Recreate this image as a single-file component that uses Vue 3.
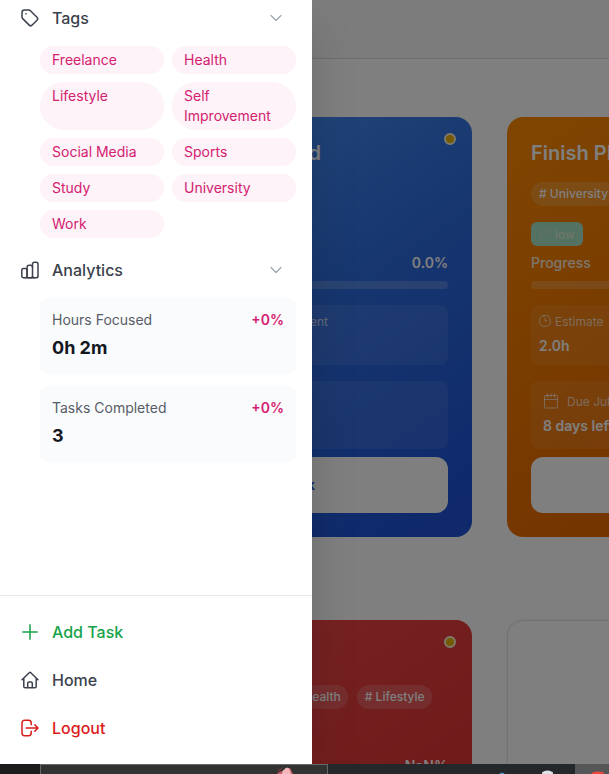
<script setup>
const tags = ['Freelance', 'Health', 'Lifestyle', 'Self Improvement', 'Social Media', 'Sports', 'Study', 'University', 'Work']
const stats = [
  { label: 'Hours Focused', value: '0h 2m', change: '+0%' },
  { label: 'Tasks Completed', value: '3', change: '+0%' },
]
</script>

<template>
  <div class="screen">
    <main class="page">
      <header class="topbar"></header>
      <section class="board">
        <article class="card blue">
          <i class="dot"></i>
          <h2 class="title tail">d</h2>
          <div class="chips"></div>
          <div class="badge-row"></div>
          <div class="progress"><span></span><b>0.0%</b></div>
          <div class="track"></div>
          <div class="metrics">
            <div class="metric"></div>
            <div class="metric spent"><div class="label">ent</div></div>
          </div>
          <div class="due"></div>
          <div class="button"><span>k</span></div>
        </article>

        <article class="card orange">
          <h2 class="title">Finish Pl</h2>
          <div class="chips"><span class="chip"># University</span></div>
          <div class="badge-row">
            <span class="badge">
              <svg width="12" height="12" viewBox="0 0 12 12"><path d="M1.500 11V2.200C4 .8 6.500 3.400 10.500 2v5.200C7 8.500 4.500 6.200 1.500 7.500" /></svg>
              low
            </span>
          </div>
          <div class="progress"><span>Progress</span></div>
          <div class="track"></div>
          <div class="metrics">
            <div class="metric">
              <div class="label">
                <svg width="12" height="12" viewBox="0 0 12 12"><rect x=".7" y=".7" width="10.600" height="10.600" rx="4.300" /><path d="M6 3.500V6h2" /></svg>
                Estimate
              </div>
              <div class="value">2.0h</div>
            </div>
            <div class="metric"></div>
          </div>
          <div class="due">
            <div class="label">
              <svg width="16" height="16" viewBox="0 0 16 16"><rect x="1.500" y="2.500" width="13" height="12.500" rx="1" /><path d="M1.500 6.500h13M4.500 1v3.500M8 1v3M11.500 1v3.500" /></svg>
              Due Jul
            </div>
            <div class="value">8 days left</div>
          </div>
          <div class="button"></div>
        </article>

        <article class="card red">
          <i class="dot"></i>
          <h2 class="title"></h2>
          <div class="chips end"><span class="chip">ealth</span><span class="chip"># Lifestyle</span></div>
          <div class="badge-row"></div>
          <div class="progress"><span></span><b>NaN%</b></div>
        </article>
        <article class="card plain"></article>
      </section>
    </main>

    <div class="overlay"></div>

    <aside class="drawer">
      <nav class="nav">
        <div class="row first">
          <svg class="icon" viewBox="0 0 20 20"><path d="M2 4.400A2.400 2.400 0 0 1 4.400 2h4.400c.6 0 1.200.2 1.600.7l6.600 6.500c.9.9.9 2.100 0 3l-4.800 4.900c-.9.9-2.100.9-3 0L2.700 10.600A2.300 2.300 0 0 1 2 9z" /><circle cx="5.900" cy="5.900" r=".3" stroke-width=".8" /></svg>
          <span>Tags</span>
          <svg class="chevron" viewBox="0 0 16 16"><path d="M3 5.500l5 5 5-5" /></svg>
        </div>
        <div class="tags"><span v-for="tag in tags" :key="tag" class="tag">{{ tag }}</span></div>
        <div class="row analytics">
          <svg class="icon" viewBox="0 0 20 20"><rect x="1.800" y="8.500" width="5.300" height="9.300" rx="1.700" /><path d="M7.100 10V7.200a2 2 0 0 1 2-2h1.400a2 2 0 0 1 2 2M5.500 17.800h9" /><path d="M7.100 9.500v6.800a1.500 1.500 0 0 0 1.500 1.500h2.400a1.500 1.500 0 0 0 1.500-1.500" /><rect x="12.500" y="2.200" width="5.500" height="15.600" rx="1.900" /></svg>
          <span>Analytics</span>
          <svg class="chevron" viewBox="0 0 16 16"><path d="M3 5.500l5 5 5-5" /></svg>
        </div>
        <div class="stats">
          <div v-for="stat in stats" :key="stat.label" class="stat">
            <div class="stat-head"><span>{{ stat.label }}</span><b>{{ stat.change }}</b></div>
            <div class="stat-value">{{ stat.value }}</div>
          </div>
        </div>
      </nav>
      <div class="footer">
        <div class="row add">
          <svg class="icon" viewBox="0 0 20 20"><path d="M10 2.800v14.400M2.800 10h14.400" /></svg>
          <span>Add Task</span>
        </div>
        <div class="row">
          <svg class="icon" viewBox="0 0 20 20"><path d="M2 9.800L9.200 2.800a1.150 1.150 0 0 1 1.600 0L18 9.800M3.800 8.200v8.300c0 .8.500 1.300 1.300 1.300h9.800c.8 0 1.300-.5 1.300-1.300V8.200M7.700 17.600v-4.300c0-.8.400-1.200 1.200-1.200h2.200c.8 0 1.200.4 1.200 1.200v4.300" /></svg>
          <span>Home</span>
        </div>
        <div class="row logout">
          <svg class="icon" viewBox="0 0 20 20"><path d="M11.200 6.800V4.900A2.600 2.600 0 0 0 8.600 2.300H4.600A2.600 2.600 0 0 0 2 4.900v10.200a2.600 2.600 0 0 0 2.600 2.600h4a2.600 2.600 0 0 0 2.600-2.600v-1.900M6.300 10h11.400M14.800 6.800L18 10l-3.200 3.200" /></svg>
          <span>Logout</span>
        </div>
      </div>
    </aside>

    <div class="taskbar">
      <div class="start"></div>
      <div class="search">
        <svg width="20" height="9" viewBox="0 0 20 9"><path d="M2 9l4-3 3 2 2-4 4-1 3 6z" fill="#c9606c" /><path d="M7 9c0-3 1-4 2.500-4.500C10 2 14 2 14.500 4.500L16 9z" fill="#f2b6bb" /><path d="M3 4l3 3M3 7l4-4" stroke="#8e3742" /></svg>
      </div>
      <div class="apps">
        <svg width="247" height="10" viewBox="0 0 247 10"><ellipse cx="174" cy="10" rx="2.500" ry="1.200" fill="#499ac7" /><path d="M214 10a5.500 3.500 0 0 1 11 0z" fill="#dce2e8" /><path d="M215 8.500v1M219.500 7.800v1M224 8.500v1" stroke="#dce2e8" stroke-width="1.500" /></svg>
      </div>
      <div class="active">
        <svg width="34" height="10" viewBox="0 0 34 10"><path d="M16 10c2-3 5-3 13-2l-1 2z" fill="#e9483e" /></svg>
      </div>
    </div>
  </div>
</template>

<style>
body { margin: 0; overflow: hidden; }
</style>

<style scoped>
* { box-sizing: border-box; }
.screen { position: relative; width: 609px; height: 774px; overflow: hidden; font-family: Inter, "Liberation Sans", sans-serif; background: #fff; }
svg { display: block; flex: none; fill: none; stroke-linecap: round; stroke-linejoin: round; }

.page { width: 100%; height: 764px; overflow: hidden; background: #fff; }
.topbar { height: 59px; background: #f9f9fa; border-bottom: 1px solid #dadce0; }
.board { display: grid; grid-template-columns: 440px 440px; grid-auto-rows: 420px; gap: 83px 35px; padding: 58px 0 0 32px; }
.card { position: relative; padding: 24px; border-radius: 16px; color: #fff; }
.blue { background: linear-gradient(145deg, #4a93f8 15%, #2f6fe0 50%, #1e52d6 95%); }
.orange { background: linear-gradient(145deg, #ff8c00, #e05800); }
.red { background: linear-gradient(145deg, #f65050, #e03434 65%, #d42222); }
.plain { background: #fff; border: 1px solid #e7e7e9; box-shadow: 0 0 2px rgba(0, 0, 0, .12); }
.dot { position: absolute; top: 16px; right: 16px; width: 12px; height: 12px; border-radius: 50%; border: 2px solid #fbf3d8; background: #eab308; }
.title { height: 24px; margin: 0 0 17px; font-size: 20px; line-height: 24px; font-weight: 600; white-space: nowrap; }
.tail { width: 265px; text-align: right; }
.chips { display: flex; gap: 9px; height: 24px; margin-bottom: 16px; }
.chips.end { justify-content: flex-end; padding-right: 16px; }
.chips.end .chip { padding: 0 7.5px; }
.chip { padding: 0 8px; border-radius: 12px; background: rgba(255, 255, 255, .16); font-size: 12px; line-height: 24px; font-weight: 550; white-space: nowrap; }
.badge-row { display: flex; height: 24px; margin-bottom: 7px; }
.badge { display: flex; align-items: center; gap: 4px; width: 52px; padding-left: 8px; border-radius: 6px; background: #a9e5c2; color: #dcebdc; font-size: 12px; font-weight: 500; }
.badge svg { stroke: #c6e3cd; }
.progress { display: flex; justify-content: space-between; height: 20px; margin-bottom: 8px; font-size: 14px; line-height: 20px; font-weight: 500; }
.progress span { opacity: .85; }
.progress b { font-weight: 600; }
.track { height: 8px; margin-bottom: 16px; border-radius: 4px; background: rgba(255, 255, 255, .18); }
.metrics { display: grid; grid-template-columns: 1fr 1fr; gap: 12px; height: 60px; margin-bottom: 16px; }
.metric { padding: 8px; border-radius: 8px; background: rgba(255, 255, 255, .08); }
.label { display: flex; align-items: center; gap: 4px; height: 16px; font-size: 12px; color: rgba(255, 255, 255, .7); white-space: nowrap; }
.label svg { stroke: rgba(255, 255, 255, .65); stroke-width: 1; }
.spent .label { width: 62px; justify-content: flex-end; }
.value { margin-top: 7px; font-size: 14px; line-height: 20px; font-weight: 600; white-space: nowrap; }
.due { height: 68px; padding: 12px; margin-bottom: 8px; border-radius: 8px; background: rgba(255, 255, 255, .08); }
.due .label { gap: 8px; }
.due .value { margin-top: 7px; }
.button { height: 56px; border-radius: 12px; background: #fff; color: #1d4ed8; font-size: 14px; font-weight: 600; line-height: 56px; }
.button span { display: block; width: 259px; text-align: right; }

.overlay { position: absolute; inset: 0 0 10px; background: rgba(0, 0, 0, .5); }
.drawer { position: absolute; left: 0; top: 0; width: 312px; height: 764px; display: flex; flex-direction: column; background: #fff; box-shadow: 0 25px 50px -12px rgba(0, 0, 0, .25); }
.nav { flex: 1; overflow: hidden; }
.row { display: flex; align-items: center; gap: 12px; height: 48px; padding: 0 28px 0 20px; color: #3b424d; font-size: 16px; font-weight: 500; }
.first { margin-top: -6px; }
.icon { width: 20px; height: 20px; stroke: currentColor; stroke-width: 1.5; }
.chevron { width: 16px; height: 16px; margin-left: auto; stroke: #9ca3af; stroke-width: 1.200; }
.tags { display: grid; grid-template-columns: 124px 124px; gap: 8px; padding: 4px 0 0 40px; }
.tag { padding: 4px 12px; border-radius: 24px; background: #fdf3f8; color: #d42170; font-size: 14px; line-height: 20px; }
.analytics { margin-top: 8px; }
.stats { display: flex; flex-direction: column; gap: 12px; padding: 4px 16px 0 40px; }
.stat { height: 76px; padding: 12px; border-radius: 8px; background: #fafbfd; }
.stat-head { display: flex; justify-content: space-between; color: #565d66; font-size: 14px; line-height: 20px; }
.stat-head b { color: #d42170; font-weight: 600; }
.stat-value { margin-top: 4px; color: #14171f; font-size: 18px; line-height: 28px; font-weight: 650; }
.footer { padding: 12px 0; border-top: 1px solid #e5e7eb; }
.add { color: #16a34a; }
.logout { color: #d91c1c; }

.taskbar { display: flex; height: 10px; position: relative; }
.start { width: 40px; background: #1c1c1d; }
.search { width: 288px; padding-left: 234px; border: 1px solid #676767; border-bottom: 0; background: #323232; }
.apps { width: 247px; background: #25282a; }
.active { width: 34px; background: #555657; }
</style>
